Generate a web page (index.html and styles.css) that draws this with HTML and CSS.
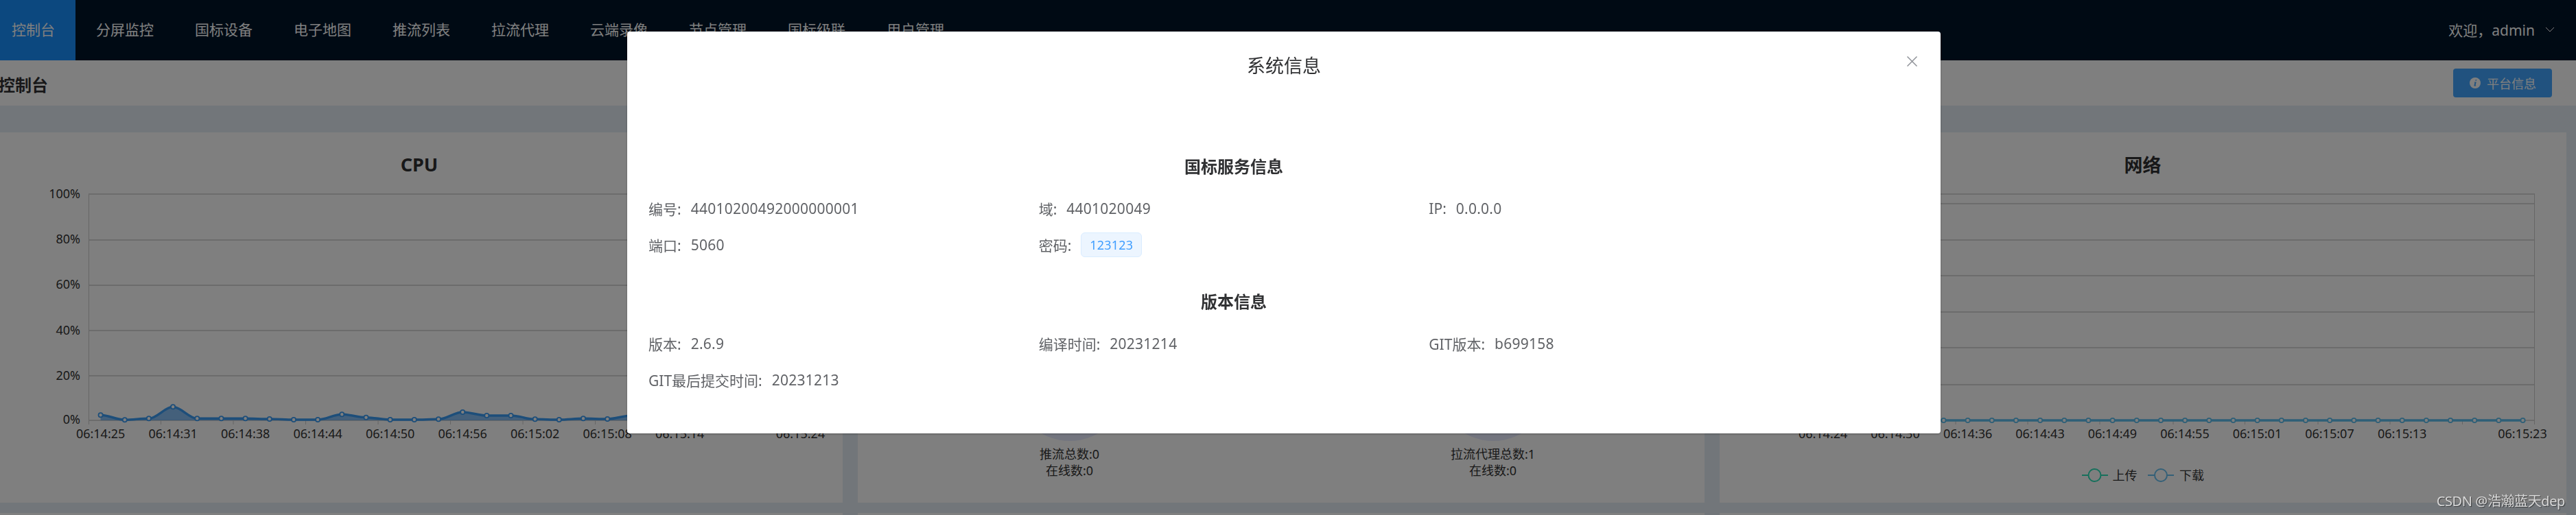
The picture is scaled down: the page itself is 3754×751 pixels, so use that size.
FILE: index.html
```html
<!DOCTYPE html>
<html lang="zh-CN">
<head>
<meta charset="utf-8">
<title>控制台</title>
<link rel="stylesheet" href="styles.css">
</head>
<body>
<div class="app">
  <nav class="nav">
    <ul class="menu">
      <li class="menu-item active">控制台</li>
      <li class="menu-item">分屏监控</li>
      <li class="menu-item">国标设备</li>
      <li class="menu-item">电子地图</li>
      <li class="menu-item">推流列表</li>
      <li class="menu-item">拉流代理</li>
      <li class="menu-item">云端录像</li>
      <li class="menu-item">节点管理</li>
      <li class="menu-item">国标级联</li>
      <li class="menu-item">用户管理</li>
    </ul>
    <div class="user">
      <span>欢迎，admin</span>
      <svg class="caret" width="14" height="8" viewBox="0 0 14 8"><path d="M1 1l6 6 6-6"/></svg>
    </div>
  </nav>
  <header class="page-head">
    <h1 class="page-title">控制台</h1>
    <button class="info-btn">
      <svg class="info-icon" width="16" height="16" viewBox="0 0 16 16"><circle cx="8" cy="8" r="8"/><path class="info-i" d="M8.6 3.2h1.7l-.3 1.6H8.300zM7 6.400h2.700L8.500 11.500h.9l-.2 1.100H6.300l1.100-5.100h-.6z"/></svg>
      <span>平台信息</span>
    </button>
  </header>
  <main class="board">
    <section class="card">
      <svg class="chart" width="1234" height="540" viewBox="-6 193 1234 540">
        <defs>
          <marker id="dot-a" markerUnits="userSpaceOnUse" markerWidth="12" markerHeight="12" refX="6" refY="6"><circle class="dot-a" cx="6" cy="6" r="3.100"/></marker>
        </defs>
        <text class="chart-title" x="611" y="250" text-anchor="middle">CPU</text>
        <path class="grid" d="M129 283H1184M129 350H1184M129 416H1184M129 482H1184M129 548H1184M129 613H1184"/>
        <path class="axis" d="M129.500 283V619M1184.500 283V619M234.500 613v6M340 613v6M445.500 613v6M551 613v6M656.500 613v6M762 613v6M867.500 613v6M973 613v6M1078.500 613v6"/>
        <g class="y-label" text-anchor="end">
          <text x="117" y="288.500">100%</text>
          <text x="117" y="355">80%</text>
          <text x="117" y="421">60%</text>
          <text x="117" y="487.500">40%</text>
          <text x="117" y="553.500">20%</text>
          <text x="117" y="618">0%</text>
        </g>
        <g class="x-label" text-anchor="middle">
          <text x="146.600" y="639">06:14:25</text>
          <text x="252.100" y="639">06:14:31</text>
          <text x="357.600" y="639">06:14:38</text>
          <text x="463.100" y="639">06:14:44</text>
          <text x="568.600" y="639">06:14:50</text>
          <text x="674.200" y="639">06:14:56</text>
          <text x="779.700" y="639">06:15:02</text>
          <text x="885.200" y="639">06:15:08</text>
          <text x="990.700" y="639">06:15:14</text>
          <text x="1166.500" y="639">06:15:24</text>
        </g>
        <path class="cpu-area" d="M146.600 605.300C158.600 605.300 169.800 612.300 181.800 612.300S204.900 610.300 216.900 610.300S240.100 593.300 252.100 593.300S275.300 610.300 287.300 610.300S310.500 610.300 322.500 610.300S345.600 610.300 357.600 610.300S380.800 611 392.800 611S416 612 428 612S451.100 612 463.100 612S486.300 604.300 498.300 604.300S521.500 608.700 533.500 608.700S556.600 612 568.600 612S591.800 612 603.800 612S627 611.300 639 611.300S662.200 601 674.200 601S697.300 606 709.300 606S732.500 606 744.500 606S767.700 611.300 779.700 611.300S802.800 612 814.800 612S838 610.300 850 610.300S873.200 611 885.200 611S908.300 606 920.300 606V613H146.600Z"/>
        <path class="cpu-line" d="M146.600 605.300C158.600 605.300 169.800 612.300 181.800 612.300S204.900 610.300 216.900 610.300S240.100 593.300 252.100 593.300S275.300 610.300 287.300 610.300S310.500 610.300 322.500 610.300S345.600 610.300 357.600 610.300S380.800 611 392.800 611S416 612 428 612S451.100 612 463.100 612S486.300 604.300 498.300 604.300S521.500 608.700 533.500 608.700S556.600 612 568.600 612S591.800 612 603.800 612S627 611.300 639 611.300S662.200 601 674.200 601S697.300 606 709.300 606S732.500 606 744.500 606S767.700 611.300 779.700 611.300S802.800 612 814.800 612S838 610.300 850 610.300S873.200 611 885.200 611S908.300 606 920.300 606"/>
      </svg>
    </section>
    <section class="card stats">
      <div class="stat">
        <div class="pie"></div>
        <p>推流总数:0</p>
        <p>在线数:0</p>
      </div>
      <div class="stat">
        <div class="pie"></div>
        <p>拉流代理总数:1</p>
        <p>在线数:0</p>
      </div>
    </section>
    <section class="card">
      <svg class="chart" width="1234" height="540" viewBox="2506 193 1234 540">
        <defs>
          <marker id="dot-b" markerUnits="userSpaceOnUse" markerWidth="12" markerHeight="12" refX="6" refY="6"><circle class="dot-b" cx="6" cy="6" r="3.100"/></marker>
        </defs>
        <text class="chart-title" x="3122.500" y="251" text-anchor="middle">网络</text>
        <path class="grid" d="M2639 283H3694M2639 297H3694M2639 350H3694M2639 402H3694M2639 455H3694M2639 507H3694M2639 561H3694M2639 613H3694"/>
        <path class="axis" d="M2639.500 283V619M3693.500 283V619M2744 613v6M2850 613v6M2955 613v6M3060 613v6M3167 613v6M3271.500 613v6M3378 613v6M3483 613v6M3588.500 613v6"/>
        <g class="x-label" text-anchor="middle">
          <text x="2656.600" y="639">06:14:24</text>
          <text x="2762" y="639">06:14:30</text>
          <text x="2867.600" y="639">06:14:36</text>
          <text x="2973" y="639">06:14:43</text>
          <text x="3078.400" y="639">06:14:49</text>
          <text x="3184" y="639">06:14:55</text>
          <text x="3289.500" y="639">06:15:01</text>
          <text x="3395" y="639">06:15:07</text>
          <text x="3500.700" y="639">06:15:13</text>
          <text x="3676" y="639">06:15:23</text>
        </g>
        <path class="net-line" d="M2656.600 613h35.170h35.170h35.170h35.170h35.170h35.170h35.170h35.170h35.170h35.170h35.170h35.170h35.170h35.170h35.170h35.170h35.170h35.170h35.170h35.170h35.170h35.170h35.170h35.170h35.170h35.170h35.170h35.170h35.170"/>
        <g class="legend">
          <path class="leg-up" d="M3034 693h9M3062 693h10"/>
          <circle class="leg-up" cx="3052.500" cy="693" r="9"/>
          <text x="3078.500" y="700">上传</text>
          <path class="leg-down" d="M3130 693h10M3158 693h10"/>
          <circle class="leg-down" cx="3149" cy="693" r="9"/>
          <text x="3176" y="700">下载</text>
        </g>
      </svg>
    </section>
    <section class="card"></section>
    <section class="card"></section>
    <section class="card"></section>
  </main>
</div>
<div class="overlay">
  <div class="dialog">
    <div class="dialog-title">系统信息</div>
    <svg class="dialog-close" width="15" height="15" viewBox="0 0 15 15"><path d="M.5.500l14 14M14.500.500l-14 14"/></svg>
    <div class="dialog-body">
      <h2 class="section-title first">国标服务信息</h2>
      <div class="info-grid">
        <div class="info-item"><span>编号:</span><span class="val">44010200492000000001</span></div>
        <div class="info-item"><span>域:</span><span class="val">4401020049</span></div>
        <div class="info-item"><span>IP:</span><span class="val">0.0.0.0</span></div>
        <div class="info-item"><span>端口:</span><span class="val">5060</span></div>
        <div class="info-item"><span>密码:</span><span class="tag">123123</span></div>
      </div>
      <h2 class="section-title">版本信息</h2>
      <div class="info-grid">
        <div class="info-item"><span>版本:</span><span class="val">2.6.9</span></div>
        <div class="info-item"><span>编译时间:</span><span class="val">20231214</span></div>
        <div class="info-item"><span>GIT版本:</span><span class="val">b699158</span></div>
        <div class="info-item"><span>GIT最后提交时间:</span><span class="val">20231213</span></div>
      </div>
    </div>
  </div>
</div>
<div class="watermark">CSDN @浩瀚蓝天dep</div>
</body>
</html>
```

FILE: styles.css
```css
* { box-sizing: border-box; }
html, body {
  margin: 0;
  height: 100%;
  overflow: hidden;
  font-family: "Noto Sans", "Noto Sans CJK SC", sans-serif;
  background: #e4ecf4;
}
.app { width: 3767px; height: 751px; margin-left: -13px; overflow: hidden; }

/* top navigation */
.nav {
  height: 88px;
  background: #001529;
  color: #fff;
  font-size: 21px;
  display: flex;
  justify-content: space-between;
}
.menu { display: flex; list-style: none; margin: 0; padding: 0; }
.menu-item { padding: 0 30px; line-height: 86px; height: 88px; white-space: nowrap; }
.menu-item.active { background: #1890ff; }
.user { display: flex; align-items: center; gap: 15px; padding: 0 31px 2px 0; }
.caret path { fill: none; stroke: #fff; stroke-width: 1; }

/* page head */
.page-head {
  height: 66px;
  background: #fff;
  display: flex;
  align-items: center;
  justify-content: space-between;
  padding: 0 35px 0 11px;
}
.page-title { margin: 2px 0 0; font-size: 24px; font-weight: 700; color: #303133; }
.info-btn {
  width: 144px;
  height: 42px;
  display: flex;
  align-items: center;
  gap: 9px;
  padding: 0 0 0 24px;
  border: 0;
  border-radius: 4px;
  background: #42a5ff;
  color: #fff;
  font: inherit;
  font-size: 18px;
}
.info-icon circle { fill: #fff; }
.info-i { fill: #42a5ff; }

/* cards */
.board {
  height: 597px;
  overflow: hidden;
  display: grid;
  grid-template-columns: repeat(3, 1234px);
  grid-auto-rows: 540px;
  gap: 15px 22px;
  padding: 39px 0 0 7px;
}
.card { background: #fff; overflow: hidden; }
.chart { display: block; font-family: "Noto Sans", "Noto Sans CJK SC", sans-serif; }
.chart-title { font-size: 27px; font-weight: 700; fill: #303133; }
.grid { stroke: #ccc; stroke-width: 1.500; fill: none; }
.axis { stroke: #ccc; stroke-width: 1; fill: none; }
.y-label, .x-label, .legend { font-size: 18px; fill: #333; }
.cpu-area { fill: #3a96f0; fill-opacity: .6; }
.cpu-line {
  fill: none;
  stroke: #3a9cf4;
  stroke-width: 3.500;
  marker-start: url(#dot-a);
  marker-mid: url(#dot-a);
  marker-end: url(#dot-a);
}
.dot-a { fill: #fff; stroke: #3a9cf4; stroke-width: 1.800; }
.net-line {
  fill: none;
  stroke: #5cbfee;
  stroke-width: 3.500;
  marker-start: url(#dot-b);
  marker-mid: url(#dot-b);
  marker-end: url(#dot-b);
}
.dot-b { fill: #fff; stroke: #5cbfee; stroke-width: 1.800; }
.leg-up { fill: none; stroke: #2fe0b8; stroke-width: 2; }
.leg-down { fill: none; stroke: #68c0f0; stroke-width: 2; }

.stats { display: flex; }
.stat { flex: 1; text-align: center; padding-top: 282px; font-size: 18px; line-height: 24px; color: #333; }
.stat p { margin: 0; }
.pie { width: 168px; height: 168px; border-radius: 50%; background: #e6eaff; margin: 0 auto 7px; }

/* dialog */
.overlay {
  position: fixed;
  inset: 0;
  background: rgba(0, 0, 0, .5);
  padding: 46px 0 0 914px;
}
.dialog {
  position: relative;
  width: 1914px;
  height: 586px;
  background: #fff;
  border-radius: 4px;
  box-shadow: 0 1px 3px rgba(0, 0, 0, .3);
  color: #606266;
  font-size: 21px;
}
.dialog-title { height: 100px; line-height: 100px; text-align: center; font-size: 27px; color: #303133; }
.dialog-close { position: absolute; top: 36px; right: 34px; }
.dialog-close path { fill: none; stroke: #909399; stroke-width: 1.500; }
.dialog-body { width: 1768px; padding: 0 31px; }
.section-title {
  margin: 39px 0 17px;
  line-height: 36px;
  text-align: center;
  font-size: 24px;
  font-weight: 700;
  color: #303133;
}
.section-title.first { margin-top: 79px; }
.info-grid { display: grid; grid-template-columns: repeat(3, 1fr); grid-auto-rows: 52.500px; }
.info-item { display: flex; align-items: center; }
.val { margin-left: 14px; letter-spacing: .25px; }
.tag {
  margin-left: 14px;
  width: 89px;
  height: 36px;
  line-height: 34px;
  text-align: center;
  font-size: 18px;
  letter-spacing: .2px;
  color: #409eff;
  background: #ecf5ff;
  border: 1px solid #d9ecff;
  border-radius: 6px;
}

.watermark {
  position: fixed;
  right: 16px;
  top: 716px;
  font-size: 20px;
  line-height: 30px;
  letter-spacing: -.4px;
  color: #d8d8d8;
  text-shadow: 1px 1px 1px rgba(0, 0, 0, .5);
  white-space: nowrap;
}
```
